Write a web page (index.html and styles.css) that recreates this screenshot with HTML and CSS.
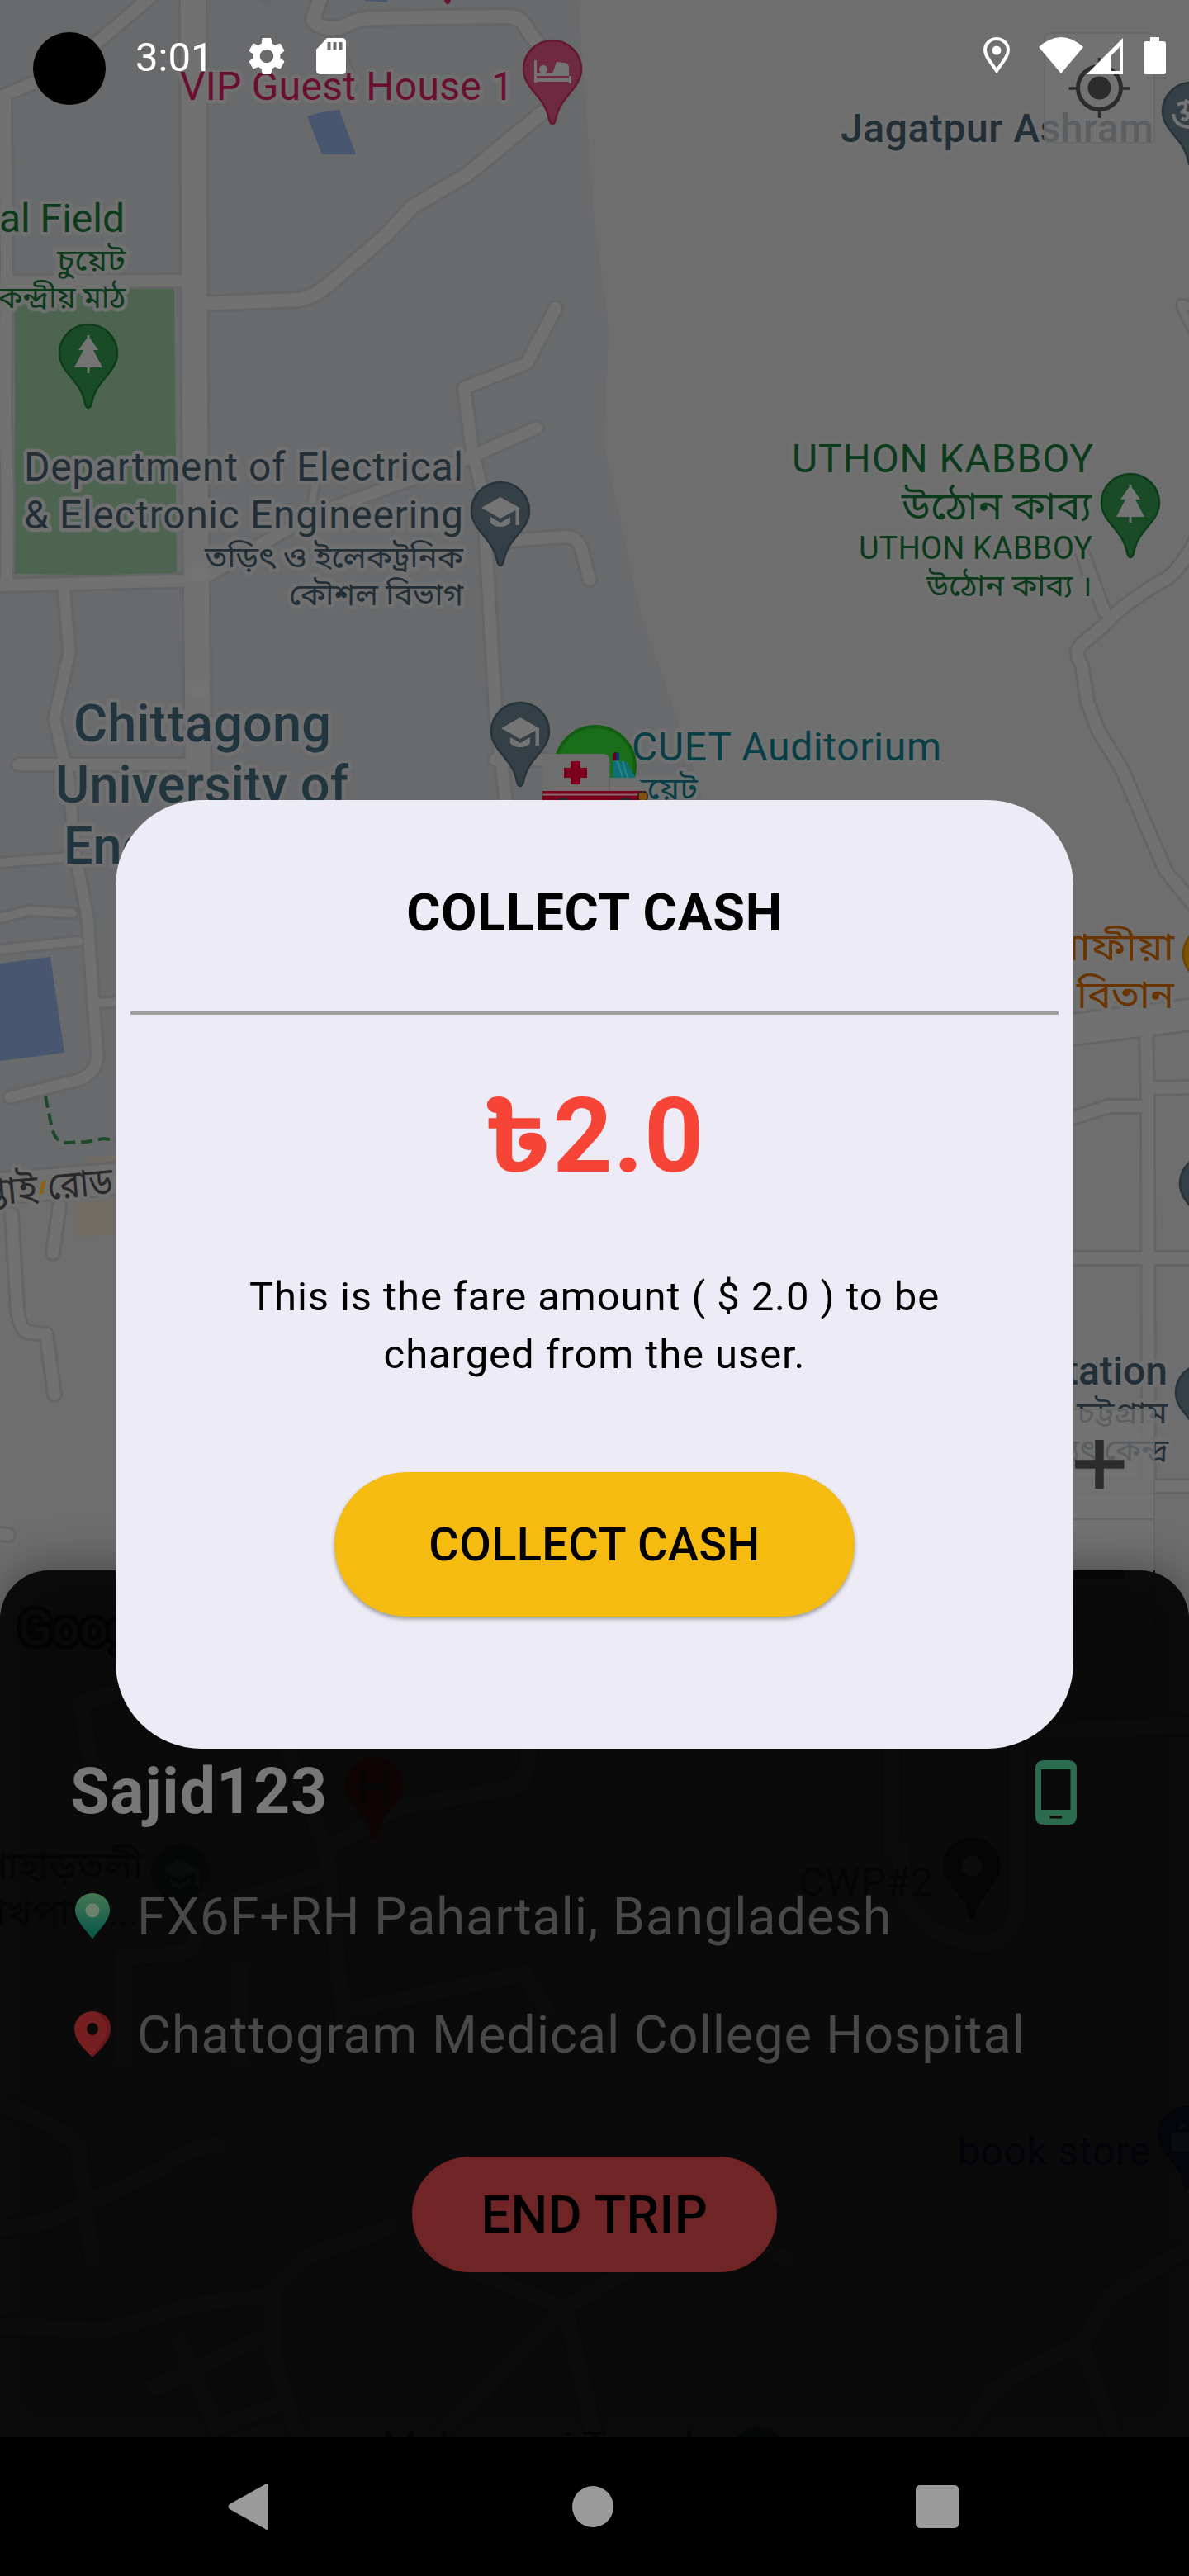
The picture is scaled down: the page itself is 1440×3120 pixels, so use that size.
FILE: index.html
```html
<!DOCTYPE html>
<html lang="en">
<head>
<meta charset="utf-8">
<title>Collect cash</title>
<link rel="stylesheet" href="styles.css">
</head>
<body>
<div class="screen">
  <svg class="map" viewBox="0 0 1440 1960" width="1440" height="1960" aria-hidden="true">
    <defs>
      <g id="roads">
        <path class="w28" d="M234-10L236 500L240 940"/>
        <path class="w14" d="M190-10L105 62L60 92L6 115L8 320L6 500L9 600L8 702"/>
        <path class="w14" d="M8 341L234 340"/>
        <path class="w16" d="M240 368L362 363Q380 360 400 343L465 287L500 250L565 212L655 138Q692 112 680 90L640 38Q632 20 616 20L450 22Q430 24 420 30Q408 36 392 33Q376 28 380 20L390-8"/>
        <path class="w6" d="M400 40Q420 60 430 105"/>
        <path class="w14" d="M673 373L638 440L562 470L572 545L585 600L600 860L615 990"/>
        <path class="w14" d="M0 709L240 703M240 704L375 625L560 558L650 518"/>
        <path class="w8" d="M377 616L386 560"/>
        <path class="w12" d="M77 710L84 790L66 870L84 950L90 1030L106 1110L112 1200L118 1280Q116 1300 95 1308L12 1329"/>
        <path class="w14" d="M22 926H235M600 656L685 650Q702 650 706 672L714 702M600 920L660 920"/>
        <path class="w10" d="M0 1045L85 1038M0 1112L35 1103L88 1106M0 1150L95 1140M115 1215L150 1213"/>
        <path class="w14" d="M14 1470L21 1585Q24 1615 38 1614L56 1616L66 1689M72 1460L64 1518M-5 1857L10 1859"/>
        <path class="w14" d="M1309 665L1337 740M1450 650Q1428 695 1405 705Q1355 735 1340 755L1310 780Q1300 790 1310 805L1317 850L1330 885L1358 930L1388 1000L1412 1055L1445 1095"/>
        <path class="w14" d="M1388 1240L1390 1330L1391 1799M1395 1318L1440 1317M1290 1357L1343 1340H1390M1290 1524H1440M1290 1800H1440"/>
        <path class="w8" d="M1440 372Q1424 360 1434 380L1450 410"/>
        <path class="w34" d="M-10 1440L150 1427M1290 1248L1450 1228"/>
      </g>
      <path id="pin" d="M0 66C-3 66-4 61-5 56C-11 32-35 22-35 0A35 35 0 1 1 35 0C35 22 11 32 5 56C4 61 3 66 0 66Z"/>
      <path id="tree" d="M-1.500-22H1.500V-19L12-4H6L17 17H1.500V24H-1.500V17H-17L-6-4H-12L-1.500-19Z"/>
      <path id="hat" d="M-23-4L0-17L23-4V17H18.500V-1L0 9ZM-12 7L0 14L12 7V14Q8 19 0 19Q-8 19-12 14Z"/>
    </defs>
    <path class="campus" d="M0 0H700L720 270L738 400L731 535L775 740L820 870L860 1000V1400L0 1424Z"/>
    <path class="field" d="M18 350L211 350L214 697L18 695Z"/>
    <path class="water" d="M372 141L388 136L411 133L431 187H390ZM0 1167L61 1159L78 1275L0 1285ZM442 0H469V3L442 1Z"/>
    <use href="#roads" class="casing"/>
    <use href="#roads" class="surface"/>
    <path class="crossing" d="M231 687h14a8 8 0 0 1 8 8v1a8 8 0 0 1-8 8h-14a8 8 0 0 1-8-8v-1a8 8 0 0 1 8-8ZM232 826h14a8 8 0 0 1 8 8v1a8 8 0 0 1-8 8h-14a8 8 0 0 1-8-8v-1a8 8 0 0 1 8-8Z"/>
    <path class="beige" d="M88 1457L150 1450V1496L90 1498ZM105 1402L150 1398V1405L105 1408Z"/>
    <path class="trail" d="M55 1328L62 1362Q66 1384 80 1384L105 1383L125 1379L150 1382"/>
    <circle cx="322" cy="-2" r="7" fill="#666768"/>
    <path d="M538 0h8q-1 5-4 5t-4-5Z" fill="#6b1231"/>

    <g class="label">
      <text class="rose s48" x="218" y="121" textLength="404">VIP Guest House 1</text>
      <text class="green s48 end" x="151" y="281">al Field</text>
      <text class="green bn36 end" x="152" y="328" textLength="83" lengthAdjust="spacingAndGlyphs">চুয়েট</text>
      <text class="green bn36 end" x="152" y="373" textLength="167" lengthAdjust="spacingAndGlyphs">কেন্দ্রীয় মাঠ</text>
      <text class="slate s48 medium" x="1018" y="172" textLength="379">Jagatpur Ashram</text>
      <text class="slate s48" x="29" y="582" textLength="532">Department of Electrical</text>
      <text class="slate s48" x="29" y="640" textLength="532">&amp; Electronic Engineering</text>
      <text class="slate bn36 end" x="561" y="688" textLength="313" lengthAdjust="spacingAndGlyphs">তড়িৎ ও ইলেকট্রনিক</text>
      <text class="slate bn36 end" x="561" y="733" textLength="211" lengthAdjust="spacingAndGlyphs">কৌশল বিভাগ</text>
      <text class="campus-name" x="89" y="898" textLength="312">Chittagong</text>
      <text class="campus-name" x="67" y="972" textLength="355">University of</text>
      <text class="campus-name" x="77" y="1046">Engineering</text>
      <text class="green s48" x="959" y="572" textLength="365">UTHON KABBOY</text>
      <text class="green bn48 end" x="1322" y="629" textLength="230" lengthAdjust="spacingAndGlyphs">উঠোন কাব্য</text>
      <text class="green s38" x="1040" y="677" textLength="283">UTHON KABBOY</text>
      <text class="green bn36 end" x="1323" y="722" textLength="201" lengthAdjust="spacingAndGlyphs">উঠোন কাব্য ।</text>
      <text class="teal s48" x="765" y="921" textLength="375">CUET Auditorium</text>
      <text class="teal bn36 end" x="845" y="968" textLength="83" lengthAdjust="spacingAndGlyphs">চুয়েট</text>
      <text class="amber bn48 end" x="1422" y="1163" textLength="176" lengthAdjust="spacingAndGlyphs">মুরাফীয়া</text>
      <text class="amber bn48 end" x="1422" y="1221" textLength="118" lengthAdjust="spacingAndGlyphs">বিতান</text>
      <text class="slate s48 medium end" x="1414" y="1677">Substation</text>
      <text class="slate bn36 end" x="1414" y="1724" textLength="110" lengthAdjust="spacingAndGlyphs">চট্টগ্রাম</text>
      <text class="slate bn36 end" x="1415" y="1769" textLength="172" lengthAdjust="spacingAndGlyphs">বিদ্যুৎ কেন্দ্র</text>
      <text class="road-name bn48 end" transform="translate(47 1455) rotate(-5)">কাপ্তাই</text>
      <text class="road-name bn48" transform="translate(59 1453) rotate(-5)" textLength="79" lengthAdjust="spacingAndGlyphs">রোড</text>
    </g>
    <path class="sand" d="M50 1432L56 1429L52 1446L47 1447Z"/>

    <g class="pin-rose" transform="translate(669 84)"><use href="#pin"/><path class="glyph" d="M-22-11h3V8H20V-2Q20-8 14-8L5-9L0 5H-5V5H-19V16H-22ZM20 8h3v9h-3Z"/><circle class="glyph" cx="-11" cy="0" r="5"/><path class="glyph" d="M-22 11H23V15H-22Z"/></g>
    <g class="pin-green" transform="translate(107 428)"><use href="#pin"/><use href="#tree" class="glyph"/></g>
    <g class="pin-green" transform="translate(1369 609)"><use href="#pin"/><use href="#tree" class="glyph"/></g>
    <g class="pin-slate" transform="translate(606 619)"><use href="#pin"/><use href="#hat" class="glyph"/></g>
    <g class="pin-slate" transform="translate(630 886)"><use href="#pin"/><use href="#hat" class="glyph"/></g>
    <g class="pin-slate" transform="translate(1443 135)"><use href="#pin"/><path class="om" d="M-17-8Q-9-13-7-7Q-7-1-13 1Q-4 0-4 6Q-6 12-12 8M-22 3Q-20 19 0 19M-8-14Q-2-8 4-12M-4 4Q0 0 4 0"/></g>
    <g class="pin-slate" transform="translate(1464 1434)"><use href="#pin"/></g>
    <g class="pin-slate" transform="translate(1459 1687)"><use href="#pin"/></g>
    <g class="pin-amber" transform="translate(1468 1156)"><use href="#pin"/></g>

    <!-- pickup circle and ambulance marker -->
    <circle cx="721" cy="928" r="48" fill="#1b6e19" stroke="#125e11" stroke-width="4"/>
    <path d="M657 913H730Q738 913 738 921V942H770L782 951V975H657Z" fill="#6e6e6e"/>
    <path d="M738 921V958" stroke="#5e6163" stroke-width="1.500"/>
    <path d="M742 921V915Q742 911 746 911V921Z" fill="#69001d"/><path d="M746 911Q750 911 750 915V921H746Z" fill="#0c2f72"/>
    <path d="M742 922H758L770 942H743Z" fill="#0e6f76"/><path d="M748 922L754 942M754 922L760 942" stroke="#2c8288" stroke-width="2"/>
    <path d="M691 922h12v8h8v12h-8v8h-12v-8h-8v-12h8Z" fill="#7b001c"/>
    <path d="M657 958H782V975H657Z" fill="#7b001c"/><path d="M657 962.500H773" stroke="#8a6670" stroke-width="2"/>
    <rect x="773" y="959" width="11" height="11" rx="4" fill="#84500d" stroke="#222" stroke-width="1.500"/>
    <circle cx="682" cy="978" r="12" fill="#26262c"/><circle cx="757" cy="978" r="12" fill="#26262c"/>

    <g class="control"><rect x="1265" y="40" width="133" height="133" rx="6"/><rect x="1265" y="1707" width="133" height="267" rx="3"/></g>
    <path d="M1265 1840H1398" stroke="#676767" stroke-width="2"/>
    <circle cx="1331.500" cy="106.500" r="26" fill="none" stroke="#2c2c2c" stroke-width="5"/><circle cx="1331.500" cy="106.500" r="14" fill="#2c2c2c"/>
    <path d="M1331.500 70V80M1331.500 133V143M1294.500 107H1304M1358 107H1368" stroke="#2c2c2c" stroke-width="3.500"/>
    <path d="M1302 1773.500H1361.500M1331.500 1744V1803" stroke="#2c2c2c" stroke-width="10.500"/>
  </svg>

  <header class="status">
    <span class="camera"></span>
    <span class="clock">3:01</span>
    <svg class="gear" viewBox="1.500 1.500 21 21" width="48" height="48"><path fill="#fff" d="M19.140 12.940c.04-.3.06-.61.06-.94 0-.32-.02-.64-.07-.94l2.030-1.580c.18-.14.23-.41.12-.61l-1.920-3.320c-.12-.22-.37-.29-.59-.22l-2.390.96c-.5-.38-1.030-.7-1.620-.94l-.36-2.540c-.04-.24-.24-.41-.48-.41h-3.840c-.24 0-.43.17-.47.41l-.36 2.540c-.59.24-1.130.57-1.620.94l-2.390-.96c-.22-.08-.47 0-.59.22L2.740 8.870c-.12.21-.08.47.12.61l2.030 1.580c-.05.3-.09.63-.09.94s.02.64.07.94l-2.030 1.580c-.18.14-.23.41-.12.61l1.920 3.320c.12.22.37.29.59.22l2.390-.96c.5.38 1.030.7 1.620.94l.36 2.540c.05.24.24.41.48.41h3.840c.24 0 .44-.17.47-.41l.36-2.540c.59-.24 1.130-.56 1.620-.94l2.390.96c.22.08.47 0 .59-.22l1.920-3.320c.12-.22.07-.47-.12-.61l-2.010-1.580zM12 15.600c-1.980 0-3.600-1.620-3.600-3.600s1.620-3.600 3.600-3.600 3.600 1.620 3.600 3.600-1.620 3.600-3.600 3.600z"/></svg>
    <svg class="sd" viewBox="0 0 36 44" width="36" height="44"><path fill="#fff" d="M13 0H31Q36 0 36 5V39Q36 44 31 44H5Q0 44 0 39V14Z"/><path stroke="#6a6b6d" stroke-width="4" d="M15.500 5V14M22.500 5V14M29.500 5V14"/></svg>
    <span class="grow"></span>
    <svg class="loc" viewBox="0 0 32 44" width="32" height="44"><path fill="none" stroke="#fff" stroke-width="4" d="M16 41C8 29 2 23 2 15.500A14 13.500 0 0 1 30 15.500C30 23 24 29 16 41Z"/><circle cx="16" cy="16" r="5.500" fill="#fff"/></svg>
    <svg class="wifi" viewBox="0 0 54 44" width="54" height="44"><path fill="#fff" d="M27 44L0 12Q27-12 54 12Z"/></svg>
    <svg class="signal" viewBox="0 0 44 44" width="44" height="44"><path fill="#fff" fill-rule="evenodd" d="M44 0V44H0ZM40 11L30 21V40H40Z"/></svg>
    <svg class="battery" viewBox="0 0 27 45" width="27" height="45"><path fill="#fff" d="M8 0H19V5H24Q27 5 27 8V42Q27 45 24 45H3Q0 45 0 42V8Q0 5 3 5H8Z"/></svg>
  </header>

  <main class="sheet">
    <svg class="sheet-map" viewBox="0 1902 1440 1050" width="1440" height="1050" aria-hidden="true">
      <defs><path id="under-roads" d="M140 2050L98 2062L110 2135M345 2110L395 2240L420 2480M395 2240L480 2190L620 2165Q640 2160 640 2118M250 2312L390 2270M150 2500V2370L215 2366Q240 2362 236 2340M420 2435L635 2390L665 2440M290 2380V2500M1080 2110V2240H1092V2290Q1110 2345 1190 2355Q1232 2350 1232 2300V2118M1270 2096L1440 2090M0 2550Q60 2565 95 2600L112 2740M0 2700L60 2690L200 2625Q225 2600 270 2597M0 2818L130 2822L240 2790L330 2780Q345 2750 380 2730L480 2695M330 2780L330 2850L360 2952M215 2830L262 2940L345 2910M180 2895L320 2830M570 2750L685 2795L760 2750M685 2795L720 2952M680 2800L530 2952M940 2730L960 2738M1440 2722L1345 2780L1310 2840Q1230 2870 1200 2900L1165 2952M1310 2840L1350 2952"/></defs>
      <use href="#under-roads" class="under-casing"/><use href="#under-roads" class="under-surface"/>
      <text class="google" x="22" y="1992">Google</text>
      <rect x="1302" y="1901" width="59" height="11" fill="#050505"/>
      <path d="M1300 1975H1393Q1398 1975 1398 1970V1902" fill="none" stroke="#080808" stroke-width="2"/>
      <text class="under bn48 end" x="173" y="2276">পাহাড়তলী</text>
      <text class="under bn48 end" x="168" y="2333">রাখপাড়া...</text>
      <text class="under s48" x="968" y="2296" textLength="162">CWP#2</text>
      <text class="under-navy s48" x="1160" y="2622" textLength="233">book store</text>
      <text class="under s48" x="463" y="2979" textLength="403">Mahamuni Temple</text>
      <g transform="translate(453 2163)"><use href="#pin" fill="#0d0403"/><path d="M-14-20V23M14-20V23M-14 1H14" stroke="#050505" stroke-width="7"/></g>
      <g transform="translate(218 2268)"><use href="#pin" fill="#050606"/><use href="#hat" fill="#0a0b0b"/></g>
      <g transform="translate(1177 2260)"><use href="#pin" fill="#050505"/><circle r="12.500" fill="#0b0b0b"/></g>
      <g transform="translate(1437 2586)"><use href="#pin" fill="#03050b"/><path d="M-18-3H10V20H-18ZM-10-3Q-10-14 0-14" fill="#0a0b0e"/></g>
      <use href="#pin" fill="#050606" transform="translate(918 2975)"/>
    </svg>
    <div class="rider">
      <h2>Sajid123</h2>
      <svg viewBox="0 0 50 78" width="50" height="78"><path fill="#2d6b4e" fill-rule="evenodd" d="M10 0H40Q50 0 50 10V68Q50 78 40 78H10Q0 78 0 68V10Q0 0 10 0ZM7 11V60H42.500V11ZM17.500 67V70.500H32V67Z"/></svg>
    </div>
    <div class="stop">
      <svg viewBox="0 0 44 56" width="44" height="56"><defs><linearGradient id="mint" x2="0" y2="1"><stop offset="0" stop-color="#47774f"/><stop offset=".45" stop-color="#28684f"/><stop offset="1" stop-color="#00564b"/></linearGradient></defs><path fill="url(#mint)" d="M22 56C14 43 1 34 1 20A21 20 0 0 1 43 20C43 34 30 43 22 56Z"/><circle cx="22" cy="21" r="8.500" fill="#6c8070"/></svg>
      <span>FX6F+RH Pahartali, Bangladesh</span>
    </div>
    <div class="stop">
      <svg viewBox="0 0 44 56" width="44" height="56"><path fill="#751f21" fill-rule="evenodd" d="M22 56C14 47 0 36 0 21A22 21 0 0 1 44 21C44 36 30 47 22 56ZM22 14A7 7.500 0 1 0 22 29A7 7.500 0 1 0 22 14Z"/><path fill="#69161d" d="M25 0.500Q44 3 44 21C44 36 30 47 22 56L20 54C32 42 39 34 39 22Q39 8 25 .5Z"/></svg>
      <span>Chattogram Medical College Hospital</span>
    </div>
    <button class="end-trip">END TRIP</button>
  </main>

  <nav class="navbar">
    <svg viewBox="0 0 50 58" width="50" height="58"><path fill="#9b9b9b" d="M45 2Q49-1 49 4V54Q49 59 45 56L2 32Q-1 29 2 26Z"/></svg>
    <span class="home"></span>
    <span class="recent"></span>
  </nav>

  <section class="dialog" role="dialog">
    <h1>COLLECT CASH</h1>
    <hr>
    <p class="amount"><span class="taka">৳</span>2.0</p>
    <p class="note">This is the fare amount ( $ 2.0 ) to be charged from the user.</p>
    <button class="collect">COLLECT CASH</button>
  </section>
</div>
</body>
</html>
```
FILE: styles.css
```css
* { box-sizing: border-box; }
body { margin: 0; background: #000; font-family: Roboto, "Noto Sans Bengali", "Noto Sans", sans-serif; }
h1, h2, p { margin: 0; }
button { border: 0; padding: 0; font-family: inherit; color: #000; font-weight: 500; }
.screen { position: relative; width: 1440px; height: 3120px; overflow: hidden; display: flex; flex-direction: column; background: #6e6e6e; }

/* Map */
.map { position: absolute; left: 0; top: 0; }
.campus { fill: #696a6c; }
.field { fill: #4c6450; }
.water { fill: #48566f; }
.beige { fill: #706c63; }
.crossing { fill: #737373; }
.sand { fill: #8a6410; }
.trail { fill: none; stroke: #1c4a28; stroke-width: 4; stroke-dasharray: 14 7; }
.casing { --edge: 6px; stroke: #646566; }
.surface { --edge: 0px; stroke: #717171; }
#roads path { fill: none; stroke-linecap: round; stroke-linejoin: round; }
#roads .w6 { stroke-width: calc(2px + var(--edge)); }
#roads .w8 { stroke-width: calc(8px + var(--edge)); }
#roads .w10 { stroke-width: calc(10px + var(--edge)); }
#roads .w12 { stroke-width: calc(13px + var(--edge)); }
#roads .w14 { stroke-width: calc(14px + var(--edge)); }
#roads .w16 { stroke-width: calc(16px + var(--edge)); }
#roads .w28 { stroke-width: calc(30px + var(--edge)); }
#roads .w34 { stroke-width: calc(36px + var(--edge)); }
.label text { paint-order: stroke; stroke: #707070; stroke-width: 9px; stroke-linejoin: round; }
.s48 { font-size: 48px; }
.s38 { font-size: 38px; }
.bn36 { font-size: 36px; }
.bn48 { font-size: 47px; }
.medium { font-weight: 500; }
.end { text-anchor: end; }
.rose { fill: #6b0f30; }
.green { fill: #0c3b1c; }
.slate { fill: #232f37; }
.teal { fill: #083e45; }
.amber { fill: #693400; }
.road-name { fill: #29292b; }
.campus-name { fill: #20353d; font-size: 63px; font-weight: 500; }
.pin-rose { fill: #6d2a41; stroke: #651831; stroke-width: 2.5px; }
.pin-green { fill: #194b26; stroke: #0e3d1b; stroke-width: 2.5px; }
.pin-slate { fill: #353f46; stroke: #28343c; stroke-width: 2.5px; }
.pin-amber { fill: #7c5200; stroke: #6c4400; stroke-width: 2.5px; }
.glyph { fill: #747474; stroke: none; }
.om { fill: none; stroke: #747474; stroke-width: 4px; }
.control { fill: rgba(116, 116, 116, .7); stroke: #666868; stroke-width: 1.5px; }

/* Status bar */
.status { position: relative; height: 140px; display: flex; align-items: flex-start; padding: 39px 28px 0 40px; flex: none; }
.camera { width: 88px; height: 88px; border-radius: 50%; background: #000; }
.clock { margin-left: 36px; margin-top: 2px; width: 92px; font-size: 49px; line-height: 58px; color: #fff; white-space: nowrap; }
.gear { margin: 5px 0 0 43px; }
.sd { margin: 7px 0 0 36px; }
.grow { flex: 1; }
.loc { margin-top: 6px; }
.wifi { margin: 6px 0 0 35px; }
.signal { margin: 7px 0 0 4px; }
.battery { margin: 6px 0 0 25px; }

/* Trip sheet */
.sheet { position: relative; margin-top: 1762px; height: 1050px; flex: none; padding: 222px 136px 0 85px; border-radius: 60px 60px 0 0; background: #0a0a0a; box-shadow: 0 0 60px rgba(0, 0, 0, .4), inset 0 0 60px #0c0e0d; display: flex; flex-direction: column; }
.sheet-map { position: absolute; left: 0; top: 0; }
.under-casing { fill: none; stroke: #090909; stroke-width: 26px; }
.under-surface { fill: none; stroke: #0b0b0b; stroke-width: 20px; }
.under { fill: #040505; }
.under-navy { fill: #02040a; }
.google { font-size: 60px; font-weight: 500; fill: #090909; stroke: #030303; stroke-width: 10px; paint-order: stroke; }
.rider { position: relative; height: 92px; display: flex; justify-content: space-between; align-items: center; }
.rider h2 { font-size: 77px; line-height: 92px; font-weight: 700; letter-spacing: .9px; color: #777; }
.rider svg { margin-top: 1px; }
.stop { position: relative; display: flex; align-items: center; height: 76px; margin-top: 67px; margin-left: 5px; }
.rider + .stop { margin-top: 68px; }
.stop svg { margin-top: -2px; }
.stop span { margin-left: 32px; font-size: 63px; line-height: 76px; letter-spacing: .9px; color: #484848; white-space: nowrap; }
.end-trip { position: relative; width: 442px; height: 140px; margin: 109px 0 0 414px; border-radius: 70px; background: #6f2426; font-size: 63px; letter-spacing: .4px; }

/* System navigation */
.navbar { height: 168px; flex: none; display: flex; justify-content: space-between; align-items: center; background: #000; padding: 0 279px 0 276px; }
.home { width: 50px; height: 50px; border-radius: 50%; background: #9b9b9b; }
.recent { width: 52px; height: 52px; border-radius: 5px; background: #9b9b9b; }

/* Dialog */
.dialog { position: absolute; left: 140px; top: 969px; width: 1160px; height: 1149px; padding: 100px 18px 0; border-radius: 104px; background: #edebf5; display: flex; flex-direction: column; align-items: center; text-align: center; color: #000; }
.dialog h1 { font-size: 63px; line-height: 74px; font-weight: 700; letter-spacing: .6px; }
.dialog hr { width: 100%; height: 4px; margin: 82px 0 0; border: 0; background: #9e9e9e; }
.amount { margin-top: 73px; height: 148px; padding-left: 13px; font-size: 126px; line-height: 148px; font-weight: 700; color: #f64436; letter-spacing: .9px; }
.taka { display: inline-block; font-size: 113px; line-height: 1; transform: scaleX(1.22); transform-origin: 100% 50%; }
.note { margin-top: 86px; width: 900px; font-size: 49px; line-height: 70px; letter-spacing: .9px; }
.collect { margin-top: 107px; width: 630px; height: 175px; border-radius: 88px; background: #f6bb11; font-size: 56px; letter-spacing: .35px; box-shadow: 0 3px 5px rgba(0, 0, 0, .35); }
```
